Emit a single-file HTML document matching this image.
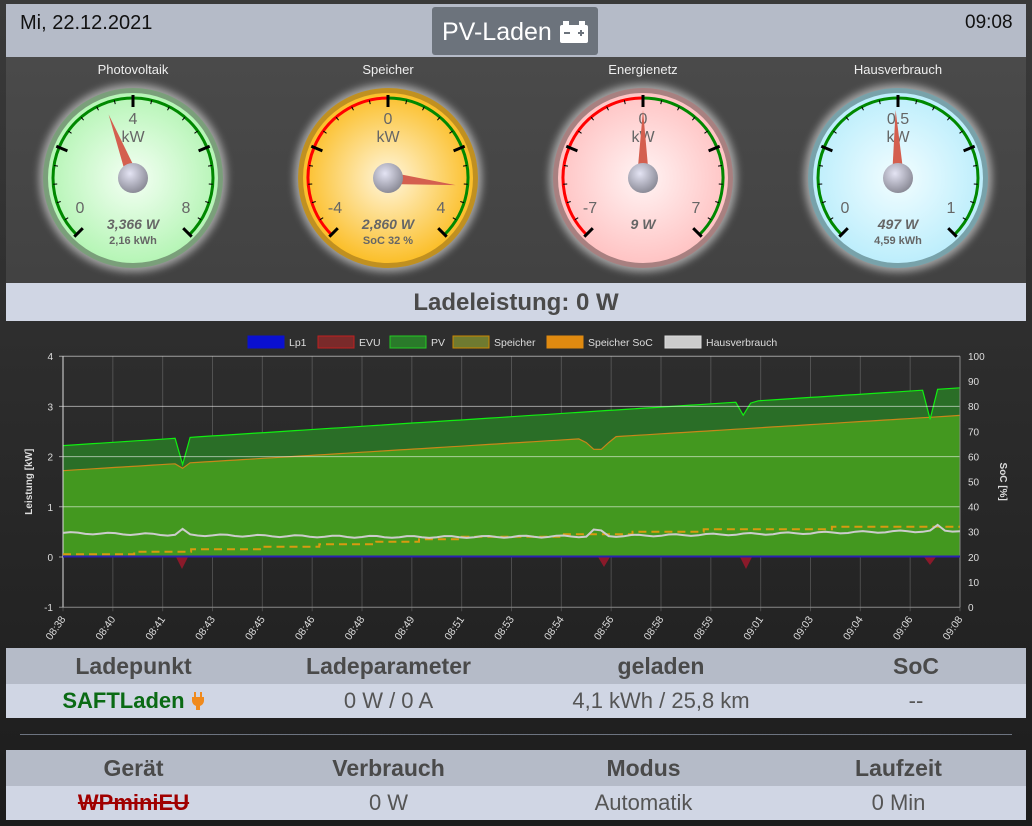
<!DOCTYPE html>
<html><head><meta charset="utf-8">
<style>
*{margin:0;padding:0;box-sizing:border-box}
body{width:1032px;height:826px;overflow:hidden;background:linear-gradient(#3a3a3a,#1c1c1c);font-family:"Liberation Sans",sans-serif;position:relative}
.abs{position:absolute}
#hdr{left:6px;top:4px;width:1020px;height:53px;background:#b5bbc8}
#gz{left:6px;top:57px;width:1020px;height:226px;background:linear-gradient(#4a4a4a,#424242)}
.gl{position:absolute;top:62px;width:200px;text-align:center;color:#eee;font-size:13px}
#ll{left:6px;top:283px;width:1020px;height:38px;background:#d0d6e4;text-align:center;font-weight:bold;font-size:24px;color:#4a4a4a;line-height:40px}
table{position:absolute;left:6px;width:1020px;border-collapse:collapse;text-align:center}
th{background:#b5bbc8;color:#4a4a4a;font-size:23px;height:36px;font-weight:bold}
td{background:#d0d6e4;color:#555;font-size:22px;height:34px}
</style></head><body>
<div class="abs" id="hdr"></div>
<div class="abs" style="left:20px;top:12px;font-size:20px;color:#111">Mi, 22.12.2021</div>
<div class="abs" style="left:965px;top:12px;font-size:19px;color:#111">09:08</div>
<div class="abs" style="left:432px;top:7px;width:166px;height:48px;background:#6c737c;border-radius:3px;color:#fff;font-size:25px;line-height:50px;padding-left:10px">PV-Laden
<svg width="30" height="22" viewBox="0 0 30 22" style="vertical-align:-3px"><rect x="4" y="0" width="6" height="4" fill="#fff"/><rect x="20" y="0" width="6" height="4" fill="#fff"/><rect x="1" y="4" width="28" height="18" rx="2" fill="#fff"/><rect x="5" y="11" width="6" height="2" fill="#6c737c"/><rect x="19" y="11" width="6" height="2" fill="#6c737c"/><rect x="21" y="9" width="2" height="6" fill="#6c737c"/></svg></div>
<div class="abs" id="gz"></div>
<div class="gl" style="left:33px">Photovoltaik</div>
<div class="gl" style="left:288px">Speicher</div>
<div class="gl" style="left:543px">Energienetz</div>
<div class="gl" style="left:798px">Hausverbrauch</div>
<svg id="gs" class="abs" style="left:0;top:0" width="1032" height="290"></svg>
<div class="abs" id="ll">Ladeleistung: 0 W</div>
<svg id="ch" class="abs" style="left:0;top:322px" width="1032" height="324"></svg>
<table style="top:648px"><tr><th style="width:255px">Ladepunkt</th><th style="width:255px">Ladeparameter</th><th style="width:290px">geladen</th><th>SoC</th></tr>
<tr><td style="color:#0a6a14;font-weight:bold">SAFTLaden <svg width="14" height="18" viewBox="0 0 14 18" style="vertical-align:-2px"><rect x="3" y="0" width="2" height="5" fill="#f08a1c"/><rect x="9" y="0" width="2" height="5" fill="#f08a1c"/><path d="M1 5h12v4a6 6 0 0 1-4 5v4h-4v-4a6 6 0 0 1-4-5z" fill="#f08a1c"/></svg></td><td>0 W / 0 A</td><td>4,1 kWh / 25,8 km</td><td>--</td></tr></table>
<div class="abs" style="left:20px;top:734px;width:992px;height:1px;background:#6d7480"></div>
<table style="top:750px"><tr><th style="width:255px">Gerät</th><th style="width:255px">Verbrauch</th><th style="width:255px">Modus</th><th>Laufzeit</th></tr>
<tr><td style="color:#a00000;font-weight:bold;text-decoration:line-through">WPminiEU</td><td>0 W</td><td>Automatik</td><td>0 Min</td></tr></table>
<script>
var NS='http://www.w3.org/2000/svg';
function el(p,t,a,txt){var e=document.createElementNS(NS,t);for(var k in a)e.setAttribute(k,a[k]);if(txt!==undefined)e.textContent=txt;p.appendChild(e);return e;}
var gs=document.getElementById('gs');
var defs=el(gs,'defs',{});
var G=[{cx:133,c1:'#f4fff4',c2:'#b6f5b6',rim:'#7a9f7a',min:'0',max:'8',mid:'4',ang:-21,v:'3,366 W',s:'2,16 kWh',red:false},
{cx:388,c1:'#fff6dc',c2:'#fbbf2a',rim:'#c09020',min:'-4',max:'4',mid:'0',ang:96,v:'2,860 W',s:'SoC 32 %',red:true},
{cx:643,c1:'#fff4f4',c2:'#ffc4c4',rim:'#a88080',min:'-7',max:'7',mid:'0',ang:0,v:'9 W',s:'',red:true},
{cx:898,c1:'#f2fdff',c2:'#bdeefc',rim:'#78a2aa',min:'0',max:'1',mid:'0.5',ang:-2,v:'497 W',s:'4,59 kWh',red:false}];
var f=el(defs,'filter',{id:'gl',x:'-30%',y:'-30%',width:'160%',height:'160%'});el(f,'feGaussianBlur',{stdDeviation:'4'});
var kg=el(defs,'radialGradient',{id:'kn',cx:'40%',cy:'35%',r:'65%'});el(kg,'stop',{offset:'0','stop-color':'#e4e4f4'});el(kg,'stop',{offset:'1','stop-color':'#8c8c98'});
G.forEach(function(g,i){
 var cx=g.cx,cy=178;
 var rg=el(defs,'radialGradient',{id:'r'+i});el(rg,'stop',{offset:'0','stop-color':g.c1});el(rg,'stop',{offset:'1','stop-color':g.c2});
 el(gs,'circle',{cx:cx,cy:cy,r:94,fill:'#bbb',filter:'url(#gl)',opacity:0.8});
 el(gs,'circle',{cx:cx,cy:cy,r:90,fill:g.rim});
 el(gs,'circle',{cx:cx,cy:cy,r:85,fill:'url(#r'+i+')'});
 var R=80;
 function pt(a,r){var t=(a-90)*Math.PI/180;return [cx+r*Math.cos(t),cy+r*Math.sin(t)];}
 function arc(a0,a1,col){var p0=pt(a0,R),p1=pt(a1,R);el(gs,'path',{d:'M'+p0+' A'+R+' '+R+' 0 '+((a1-a0)>180?1:0)+' 1 '+p1,stroke:col,'stroke-width':3,fill:'none'});}
 if(g.red){arc(-135,0,'#f00');arc(0,135,'#080');}else arc(-135,135,'#080');
 for(var k=0;k<=20;k++){var a=-135+13.5*k;var maj=k%5==0;var p0=pt(a,R-(maj?9:4)),p1=pt(a,R+(maj?3:0));el(gs,'line',{x1:p0[0],y1:p0[1],x2:p1[0],y2:p1[1],stroke:'#000','stroke-width':maj?3:1});}
 var st={fill:'#666','font-size':16,'text-anchor':'middle','font-family':'Liberation Sans'};
 el(gs,'text',Object.assign({x:cx,y:124},st),g.mid);
 el(gs,'text',Object.assign({x:cx,y:142,'font-size':18},st),'kW');
 el(gs,'text',Object.assign({x:cx-53,y:213},st),g.min);
 el(gs,'text',Object.assign({x:cx+53,y:213},st),g.max);
 el(gs,'text',{x:cx,y:229,fill:'#666','font-size':14,'font-weight':'bold','font-style':'italic','text-anchor':'middle'},g.v);
 if(g.s)el(gs,'text',{x:cx,y:244,fill:'#666','font-size':11,'font-weight':'bold','text-anchor':'middle'},g.s);
 var tp=pt(g.ang,68),b1=pt(g.ang-90,6),b2=pt(g.ang+90,6);
 el(gs,'polygon',{points:tp+' '+b1+' '+b2,fill:'#d45f4f'});
 el(gs,'circle',{cx:cx,cy:cy,r:15,fill:'url(#kn)'});
});
var ch=document.getElementById('ch');var oy=-322;
var X0=63,X1=960;function Y(k){return 557-50.2*k+oy;}function YS(s){return 607-2.51*s+oy;}
function xm(m){return X0+(X1-X0)*m/30;}
var L=[['Lp1','#0a10d0','#0a10d0',248],['EVU','#7a2a2a','#c02020',318],['PV','#2a7a2a','#2c2',390],['Speicher','#6f7a30','#c80',453],['Speicher SoC','#e08a10','#e08a10',547],['Hausverbrauch','#ccc','#ddd',665]];
L.forEach(function(l){el(ch,'rect',{x:l[3],y:14,width:36,height:12,fill:l[1],stroke:l[2]});el(ch,'text',{x:l[3]+41,y:24,fill:'#ddd','font-size':10.5},l[0]);});
function path(pts){return pts.map(function(p,i){return (i?'L':'M')+p[0].toFixed(1)+' '+p[1].toFixed(1);}).join(' ');}
var pv=[],sp=[],hv=[];
for(var m=0;m<=30;m+=0.25){var x=xm(m);
 var v=2.22+1.15*m/30;if(Math.abs(x-182)<5)v-=0.6*(1-Math.abs(x-182)/5);if(Math.abs(x-746)<5)v-=0.6*(1-Math.abs(x-746)/5);if(Math.abs(x-930)<5)v-=0.6*(1-Math.abs(x-930)/5);
 pv.push([x,Y(v)]);
 var s=1.72+1.1*m/30;if(Math.abs(x-598)<15)s-=0.25*Math.cos((x-598)/15*Math.PI/2);if(Math.abs(x-180)<4)s-=0.1;
 sp.push([x,Y(s)]);
 var h=0.48-0.08*Math.sin(m/8)+0.02*Math.sin(m*5);if(Math.abs(x-597)<8)h+=0.2*(1-Math.abs(x-597)/8);if(Math.abs(x-186)<4)h+=0.1;if(Math.abs(x-935)<4)h+=0.1;
 hv.push([x,Y(h)]);}
for(var i=0;i<19;i++){var x=X0+i*(X1-X0)/18;el(ch,'line',{x1:x,y1:Y(4),x2:x,y2:Y(-1)+4,stroke:'rgba(255,255,255,0.18)'});
 el(ch,'text',{x:x+3,y:Y(-1)+12,fill:'#ddd','font-size':10.5,'text-anchor':'end',transform:'rotate(-55 '+(x+3)+' '+(Y(-1)+12)+')'},['08:38','08:40','08:41','08:43','08:45','08:46','08:48','08:49','08:51','08:53','08:54','08:56','08:58','08:59','09:01','09:03','09:04','09:06','09:08'][i]);}
el(ch,'path',{d:path(pv)+' L'+X1+' '+Y(0)+' L'+X0+' '+Y(0)+'Z',fill:'#2a6e27'});
el(ch,'path',{d:path(sp)+' L'+X1+' '+Y(0)+' L'+X0+' '+Y(0)+'Z',fill:'#43981f'});
el(ch,'path',{d:path(sp),stroke:'#c8861a',fill:'none','stroke-width':1.2});
el(ch,'path',{d:path(pv),stroke:'#1e1',fill:'none','stroke-width':1.2});
for(var k=-1;k<=4;k++){el(ch,'line',{x1:X0-4,y1:Y(k),x2:X1,y2:Y(k),stroke:k==-1?'#888':'rgba(255,255,255,0.55)'});
 el(ch,'text',{x:X0-10,y:Y(k)+4,fill:'#ddd','font-size':10,'text-anchor':'end'},String(k));}
for(var s=0;s<=100;s+=10)el(ch,'text',{x:968,y:YS(s)+4,fill:'#ddd','font-size':10},String(s));
el(ch,'line',{x1:X0,y1:Y(4),x2:X0,y2:Y(-1),stroke:'#ddd'});
el(ch,'line',{x1:X1,y1:Y(4),x2:X1,y2:Y(-1),stroke:'#888'});
[[182,12],[604,10],[746,12],[930,8]].forEach(function(d){el(ch,'polygon',{points:(d[0]-6)+','+Y(0)+' '+(d[0]+6)+','+Y(0)+' '+d[0]+','+(Y(0)+d[1]),fill:'#8a1a2a'});});
el(ch,'line',{x1:X0,y1:Y(0)-0.5,x2:X1,y2:Y(0)-0.5,stroke:'#2a20b0','stroke-width':2});
var soc=[[0,21],[5,22],[9,23],[14,24],[18,25],[22,26],[25,27],[28,28],[35,29],[40,30],[45,31],[54,32],[63,32]];
var sd=[];soc.forEach(function(p,i){var x=X0+(X1-X0)*p[0]/63;if(i)sd.push([x,YS(soc[i-1][1])]);sd.push([x,YS(p[1])]);});
el(ch,'path',{d:path(sd),stroke:'#d89a10',fill:'none','stroke-width':2,'stroke-dasharray':'8,5'});
el(ch,'path',{d:path(hv),stroke:'#ccc','stroke-width':2,fill:'none'});
el(ch,'text',{x:32,y:Y(1.5),fill:'#ddd','font-size':10,'font-weight':'bold','text-anchor':'middle',transform:'rotate(-90 32 '+Y(1.5)+')'},'Leistung [kW]');
el(ch,'text',{x:1000,y:Y(1.5),fill:'#ddd','font-size':10,'font-weight':'bold','text-anchor':'middle',transform:'rotate(90 1000 '+Y(1.5)+')'},'SoC [%]');
</script>
</body></html>
